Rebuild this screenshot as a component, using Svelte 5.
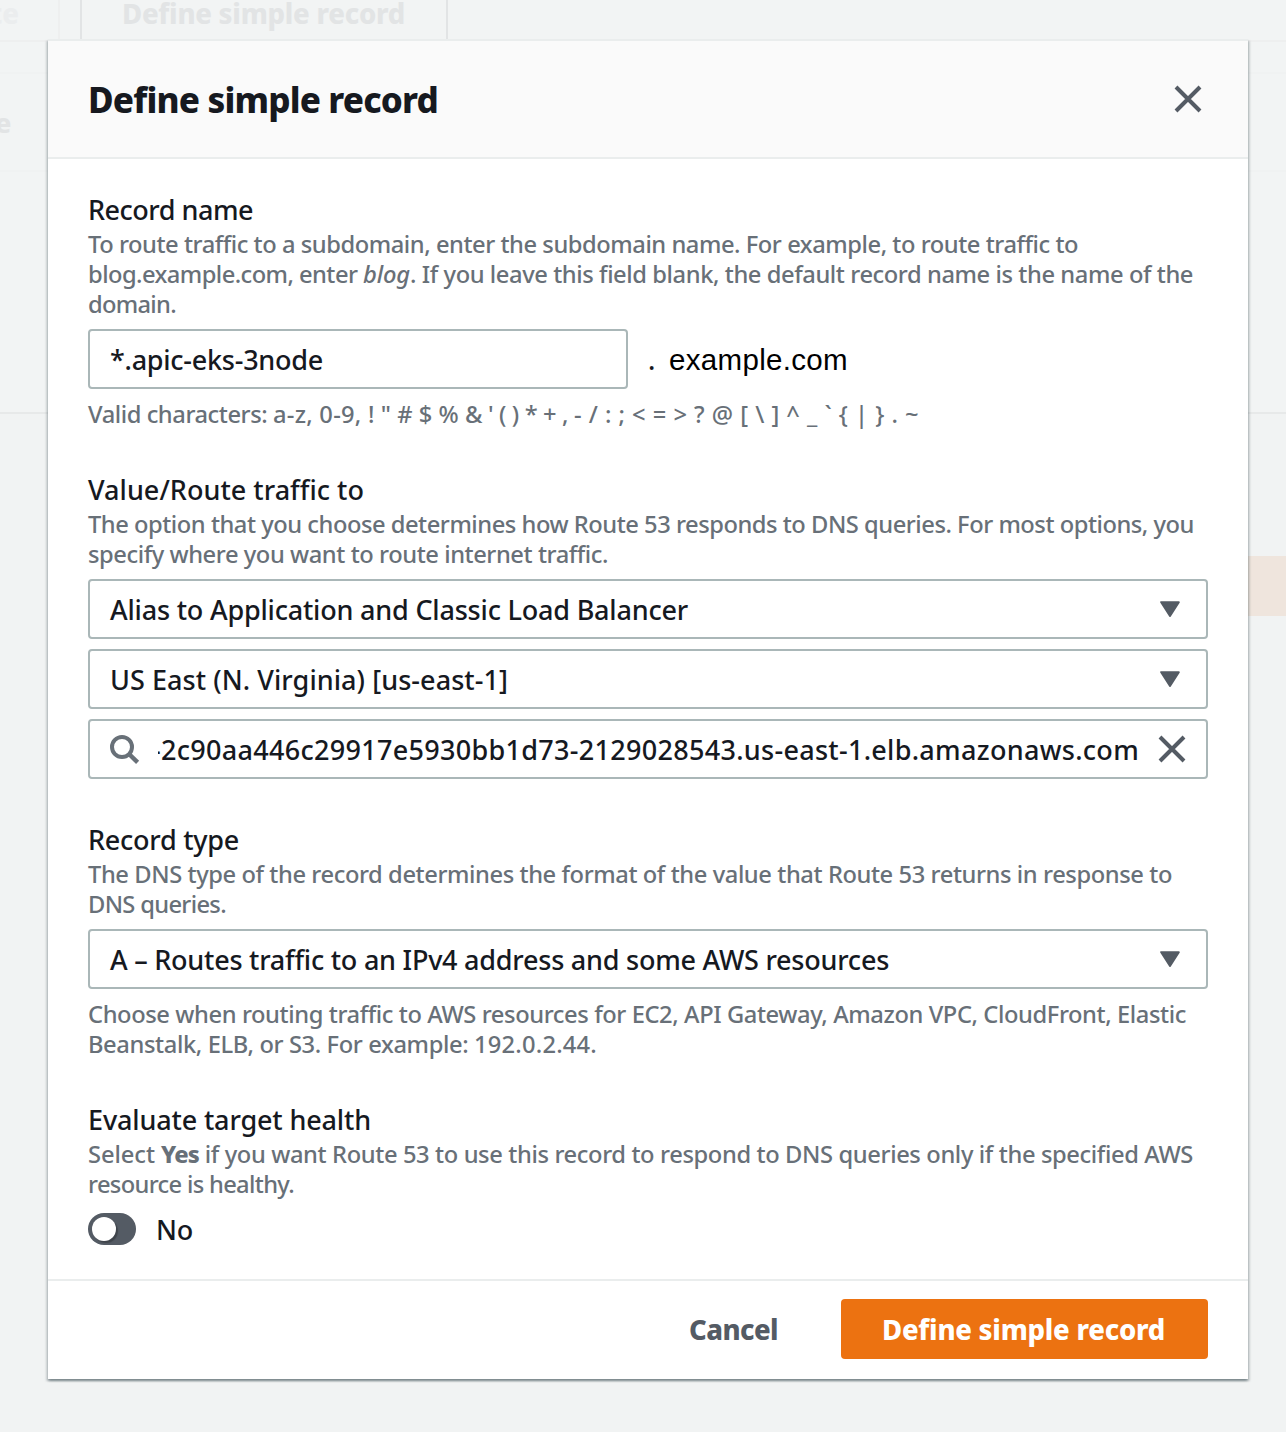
<script>
  // Tracks a single run of text so that it spans the given width.
  function fit(node, width) {
    const natural = node.getBoundingClientRect().width;
    const count = node.textContent.length;
    node.style.letterSpacing = `${(width - natural) / count}px`;
  }

  const nameHelp = [
    [{ w: 990, t: 'To route traffic to a subdomain, enter the subdomain name. For example, to route traffic to' }],
    [
      { w: 275, t: 'blog.example.com, enter ' },
      { w: 47, t: 'blog', kind: 'italic' },
      { w: 783, t: '. If you leave this field blank, the default record name is the name of the' }
    ],
    [{ w: 88, t: 'domain.' }]
  ];
  const nameHint = [
    [
      { w: 185, t: 'Valid characters: ' },
      { w: 95, t: 'a-z, 0-9, ' },
      { w: 97, t: '! " # $ % ' },
      { w: 109, t: '& \' ( ) * + , ' },
      { w: 345, t: '- / : ; < = > ? @ [ \\ ] ^ _ ` { | } . ~' }
    ]
  ];
  const routeHelp = [
    [{ w: 1106, t: 'The option that you choose determines how Route 53 responds to DNS queries. For most options, you' }],
    [{ w: 520, t: 'specify where you want to route internet traffic.' }]
  ];
  const typeHelp = [
    [{ w: 1084, t: 'The DNS type of the record determines the format of the value that Route 53 returns in response to' }],
    [{ w: 138, t: 'DNS queries.' }]
  ];
  const typeHint = [
    [{ w: 1098, t: 'Choose when routing traffic to AWS resources for EC2, API Gateway, Amazon VPC, CloudFront, Elastic' }],
    [
      { w: 386, t: 'Beanstalk, ELB, or S3. For example: ' },
      { w: 123, t: '192.0.2.44.' }
    ]
  ];
  const healthHelp = [
    [
      { w: 73, t: 'Select ' },
      { w: 38, t: 'Yes', kind: 'strong' },
      { w: 994, t: ' if you want Route 53 to use this record to respond to DNS queries only if the specified AWS' }
    ],
    [{ w: 206, t: 'resource is healthy.' }]
  ];
</script>

{#snippet lines(list)}
  <div class="help">
    {#each list as line}
      <div class="row">{#each line as p}<span class={['fit', p.kind]} use:fit={p.w}>{p.t}</span>{/each}</div>
    {/each}
  </div>
{/snippet}

{#snippet select(text, w)}
  <div class="control">
    <span class="fit" use:fit={w}>{text}</span>
    <svg width="20" height="16" viewBox="0 0 20 16">
      <path d="M1.2 1.2H18.8L10 15Z" fill="#545b64" stroke="#545b64" stroke-width="2" stroke-linejoin="round" />
    </svg>
  </div>
{/snippet}

{#snippet cross()}
  <svg width="28" height="28" viewBox="0 0 28 28">
    <path d="M2 2L26 26M26 2L2 26" stroke="#545b64" stroke-width="4" fill="none" />
  </svg>
{/snippet}

<div class="page">
  <div class="toolbar">
    <div class="ghost-first">te</div>
    <div class="ghost-button"><span class="fit" use:fit={283}>Define simple record</span></div>
  </div>
  <div class="filter"></div>
  <div class="head">e</div>
  <div class="body"></div>
  <div class="lower"><div class="band"></div></div>

  <div class="modal">
    <header>
      <h1><span class="fit" use:fit={350}>Define simple record</span></h1>
      {@render cross()}
    </header>

    <main>
      <section>
        <div class="label"><span class="fit" use:fit={165}>Record name</span></div>
        {@render lines(nameHelp)}
        <div class="name-row">
          <div class="control name"><span class="fit" use:fit={213}>*.apic-eks-3node</span></div>
          <span class="dot">.</span>
          <span class="domain"><span class="fit" use:fit={179}>example.com</span></span>
        </div>
        {@render lines(nameHint)}
      </section>

      <section>
        <div class="label"><span class="fit" use:fit={276}>Value/Route traffic to</span></div>
        {@render lines(routeHelp)}
        {@render select('Alias to Application and Classic Load Balancer', 578)}
        {@render select('US East (N. Virginia) [us-east-1]', 398)}
        <div class="control search">
          <svg class="lens" width="30" height="30" viewBox="0 0 30 30">
            <circle cx="12" cy="12" r="10" fill="none" stroke="#687078" stroke-width="4" />
            <path d="M19 19L27.6 27.4" stroke="#687078" stroke-width="4.4" />
          </svg>
          <div class="clip"><span class="fit" use:fit={987}>-2c90aa446c29917e5930bb1d73-2129028543.us-east-1.elb.amazonaws.com</span></div>
          {@render cross()}
        </div>
      </section>

      <section>
        <div class="label"><span class="fit" use:fit={151}>Record type</span></div>
        {@render lines(typeHelp)}
        {@render select('A – Routes traffic to an IPv4 address and some AWS resources', 779)}
        {@render lines(typeHint)}
      </section>

      <section>
        <div class="label"><span class="fit" use:fit={283}>Evaluate target health</span></div>
        {@render lines(healthHelp)}
        <div class="toggle-row">
          <div class="toggle"><div class="knob"></div></div>
          <span class="fit answer" use:fit={37}>No</span>
        </div>
      </section>
    </main>

    <footer>
      <div class="cancel"><span class="fit" use:fit={89}>Cancel</span></div>
      <div class="primary"><span class="fit" use:fit={283}>Define simple record</span></div>
    </footer>
  </div>
</div>

<style>
  :global(body) {
    margin: 0;
    background: #f1f3f3;
  }
  .page {
    position: relative;
    width: 1286px;
    height: 1432px;
    overflow: hidden;
    background: #f1f3f3;
    font-family: 'Noto Sans', 'Open Sans', sans-serif;
    color: #16191f;
  }
  .fit {
    display: inline-block;
    white-space: pre;
    flex: none;
  }

  /* Dimmed page behind the dialog */
  .toolbar {
    display: flex;
    gap: 20px;
    height: 40px;
    background: #f2f4f4;
    border-bottom: 2px solid #eeefef;
    color: #e2e4e5;
    font-size: 27.5px;
    font-weight: 800;
    line-height: 28px;
  }
  .ghost-first {
    box-sizing: border-box;
    width: 60px;
    border-right: 2px solid #eeefef;
    color: #ebedee;
    text-indent: -10px;
  }
  .ghost-button {
    box-sizing: border-box;
    width: 368px;
    padding-left: 40px;
    border: solid #e2e4e5;
    border-width: 0 2px;
  }
  .filter {
    height: 30px;
    background: #f2f4f4;
    border-bottom: 2px solid #f0f2f2;
  }
  .head {
    height: 96px;
    background: #f2f4f4;
    border-bottom: 2px solid #f0f2f2;
    color: #e2e4e5;
    font-size: 27px;
    font-weight: 800;
    line-height: 97px;
    text-indent: -5px;
  }
  .body {
    height: 240px;
    background: #f2f4f4;
    border-bottom: 2px solid #e7e9e9;
  }
  .lower {
    padding-top: 142px;
  }
  .band {
    height: 60px;
    margin-left: 700px;
    background: #efe5dd;
  }

  /* Dialog */
  .modal {
    position: absolute;
    left: 48px;
    top: 39px;
    width: 1200px;
    background: #fff;
    box-shadow:
      0 2px 2px rgba(0, 28, 36, 0.3),
      2px 2px 2px rgba(0, 28, 36, 0.15),
      -2px 2px 2px rgba(0, 28, 36, 0.15);
  }
  header {
    display: flex;
    align-items: center;
    justify-content: space-between;
    box-sizing: border-box;
    height: 120px;
    padding: 0 46px 0 40px;
    background: #fafafa;
    border: solid #eaeded;
    border-width: 2px 0;
  }
  h1 {
    margin: 0;
    padding-top: 2px;
    font-size: 35px;
    line-height: 48px;
    font-weight: 800;
  }
  main {
    display: flex;
    flex-direction: column;
    gap: 40px;
    padding: 30px 40px;
  }
  section {
    display: flex;
    flex-direction: column;
    gap: 10px;
  }
  .label {
    height: 40px;
    margin-bottom: -10px;
    font-size: 27px;
    font-weight: 500;
    line-height: 42px;
  }
  .help {
    font-size: 23.7px;
    font-weight: 550;
    line-height: 30px;
    color: #687078;
  }
  .row {
    display: flex;
    height: 30px;
  }
  .italic {
    font-style: italic;
  }
  .strong {
    font-weight: 800;
  }
  .control {
    display: flex;
    align-items: center;
    justify-content: space-between;
    box-sizing: border-box;
    height: 60px;
    padding: 0 26px 0 20px;
    border: 2px solid #aab7b8;
    border-radius: 4px;
    background: #fff;
    font-size: 27px;
    font-weight: 500;
    line-height: 54px;
  }
  .control .fit {
    padding-top: 2px;
  }
  .name-row {
    display: flex;
    align-items: center;
    font-size: 27px;
  }
  .name {
    width: 540px;
  }
  .dot {
    width: 21px;
    margin-left: 20px;
    font-weight: 500;
  }
  .domain {
    font-family: 'Liberation Sans', Arial, sans-serif;
    font-size: 29.5px;
    color: #000;
  }
  .domain .fit {
    padding-top: 2px;
  }
  .search {
    gap: 18px;
    padding-right: 20px;
  }
  .lens {
    padding-top: 2px;
  }
  .clip {
    display: flex;
    flex: 1;
    justify-content: flex-end;
    overflow: hidden;
  }
  .clip .fit {
    margin-right: 1px;
  }
  .toggle-row {
    display: flex;
    align-items: center;
    gap: 20px;
    height: 40px;
    font-size: 27px;
    font-weight: 500;
    line-height: 38px;
  }
  .answer {
    padding-top: 2px;
  }
  .toggle {
    display: flex;
    align-items: center;
    box-sizing: border-box;
    width: 48px;
    height: 32px;
    padding-left: 4px;
    border-radius: 16px;
    background: #545b64;
  }
  .knob {
    width: 24px;
    height: 24px;
    border-radius: 50%;
    background: #fff;
    box-shadow: 2px 2px 1px rgba(0, 0, 0, 0.25);
  }
  footer {
    display: flex;
    justify-content: flex-end;
    align-items: center;
    box-sizing: border-box;
    height: 100px;
    padding: 0 40px 2px 0;
    border-top: 2px solid #eaeded;
    font-size: 27.5px;
    font-weight: 800;
    line-height: 62px;
  }
  .cancel {
    margin-right: 63px;
    padding-top: 2px;
    color: #545b64;
  }
  .primary {
    box-sizing: border-box;
    width: 367px;
    height: 60px;
    padding-left: 41px;
    border-radius: 4px;
    background: #ec7211;
    color: #fff;
  }
</style>
